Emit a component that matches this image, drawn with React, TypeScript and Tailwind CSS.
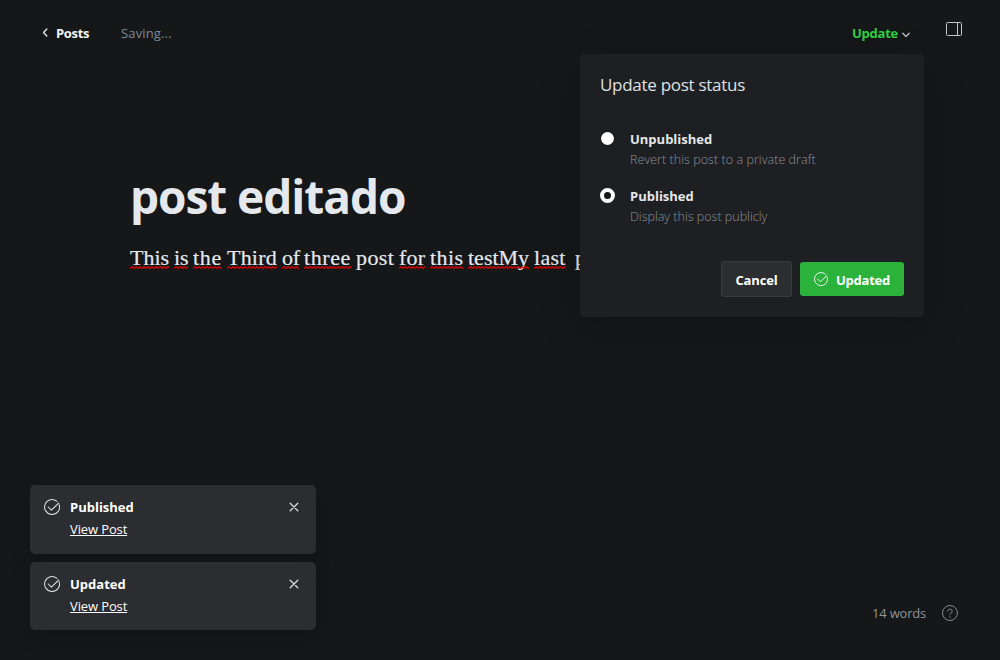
import React from "react";

const sans = "font-['Open_Sans','Noto_Sans',sans-serif]";

function CheckCircle({ className }: { className: string }) {
  return (
    <svg viewBox="0 0 24 24" fill="none" stroke="currentColor" strokeWidth="1.6" strokeLinecap="round" strokeLinejoin="round" className={className}>
      <path d="M22.8 8.8A11.2 11.2 0 1 1 19.4 3.6" />
      <path d="M6.4 12l4.6 4.8L22.2 6" />
    </svg>
  );
}

function Word({ text, box, gap, flagged = true }: { text: string; box: string; gap: string; flagged?: boolean }) {
  return (
    <span className={`relative block h-7 shrink-0 whitespace-nowrap ${box} ${gap}`}>
      {text}
      {flagged && (
        <svg className="absolute left-0 top-[22px] h-[3px] w-full">
          <rect width="100%" height="3" fill="url(#squiggle)" />
        </svg>
      )}
    </span>
  );
}

function Option({ title, note, checked, titleCls, noteCls }: { title: string; note: string; checked?: boolean; titleCls: string; noteCls: string }) {
  return (
    <div className="flex h-[57px] items-start">
      <span className={checked ? "mt-[4px] block size-[15px] rounded-full border-[4px] border-white bg-[#15171a]" : "ml-px mt-[5px] block size-[13px] rounded-full bg-white shadow-[0_0_0_1px_#15171a]"} />
      <div className={checked ? "ml-[15px] pt-px" : "ml-4 pt-px"}>
        <div className={`h-5 whitespace-nowrap text-[13px] font-bold leading-[22px] text-[#e5e7e9] ${titleCls}`}>{title}</div>
        <div className={`whitespace-nowrap text-[12.5px] font-light leading-6 text-[#8b9298] ${noteCls}`}>{note}</div>
      </div>
    </div>
  );
}

function Toast({ title, cls, height }: { title: string; cls: string; height: string }) {
  return (
    <div className={`flex w-[286px] items-start rounded-[5px] bg-[#2c2d30] pl-[14px] pr-[17px] pt-[14px] shadow-[0_6px_18px_rgba(0,0,0,0.2)] ${height}`}>
      <CheckCircle className="size-4 text-[#d8dadc]" />
      <div className="-mt-[2px] ml-[10px] grow">
        <div className={`h-5 text-[13px] font-bold leading-5 text-white ${cls}`}>{title}</div>
        <a className="mt-[2px] block w-fit whitespace-nowrap text-[13px] leading-5 tracking-[-0.12px] text-white underline decoration-1 underline-offset-1">View Post</a>
      </div>
      <svg viewBox="0 0 10 10" className="mt-[3px] size-[10px]" fill="none" stroke="#dcdddf" strokeWidth="1.3" strokeLinecap="round">
        <path d="M1.2 1.2l7.6 7.6M8.8 1.2L1.2 8.8" />
      </svg>
    </div>
  );
}

export default function App() {
  return (
    <div className={`relative flex h-[660px] w-[1000px] flex-col overflow-hidden bg-[#151719] ${sans}`}>
      <svg className="absolute size-0">
        <defs>
          <pattern id="squiggle" width="4" height="3" patternUnits="userSpaceOnUse">
            <path d="M-1 1.5L0 2.5L2 .5L4 2.5L5 1.5" fill="none" stroke="#e80000" strokeWidth="1.1" />
          </pattern>
        </defs>
      </svg>

      <header className="flex h-[58px] items-start pl-[42px] pr-[38px]">
        <svg viewBox="0 0 6 10" className="mt-[28px] h-[9px] w-[6px]" fill="none" stroke="#e5e7e9" strokeWidth="1.5" strokeLinecap="round" strokeLinejoin="round">
          <path d="M5 1.2L1.4 5L5 8.8" />
        </svg>
        <span className="ml-[8px] mt-[23px] w-[65px] text-[13px] font-bold leading-5 tracking-[-0.3px] text-[#f4f5f6]">Posts</span>
        <span className="mt-[23px] text-[13px] leading-5 tracking-[0.15px] text-[#7c8b9a]">Saving...</span>
        <span className="ml-auto mt-[23px] w-[50px] text-[13px] font-bold leading-5 tracking-[-0.25px] text-[#30cf43]">Update</span>
        <svg viewBox="0 0 8 6" className="mt-[32px] h-[6px] w-[8px]" fill="none" stroke="#b4b6b8" strokeWidth="1.4" strokeLinecap="round" strokeLinejoin="round">
          <path d="M.8 1.2L4 4.6L7.2 1.2" />
        </svg>
        <svg viewBox="0 0 16 14" className="ml-9 mt-[22px] h-[14px] w-4" fill="none" stroke="#c3c5c7">
          <rect x=".5" y=".5" width="15" height="13" rx="1" />
          <path d="M11.5 1v12" />
        </svg>
      </header>

      <main className="flex flex-col pl-[130px] pt-[103px]">
        <h1 className="h-[70px] whitespace-nowrap text-[46px] font-bold leading-[70px] tracking-[-1.05px] text-[#e5e9ed]">post editado</h1>
        <p className="mt-[13px] flex font-['Liberation_Serif',serif] text-[22px] leading-7 text-[#e5e9ed] [-webkit-text-stroke:0.2px_#e5e9ed]">
          <Word text="This" box="w-[39px]" gap="mr-[5px]" />
          <Word text="is" box="w-[14px]" gap="mr-[5px]" />
          <Word text="the" box="w-[29px] tracking-[0.7px]" gap="mr-[5px]" />
          <Word text="Third" box="w-[50px] tracking-[0.2px]" gap="mr-[5px]" />
          <Word text="of" box="w-[17px] tracking-[-0.2px]" gap="mr-[5px]" />
          <Word text="three" box="w-[47px] tracking-[0.6px]" gap="mr-[5px]" />
          <Word text="post" box="w-[38px] tracking-[0.4px]" gap="mr-[5px]" flagged={false} />
          <Word text="for" box="w-[26px] tracking-[0.2px]" gap="mr-[5px]" />
          <Word text="this" box="w-[33px] tracking-[0.4px]" gap="mr-[5px]" />
          <Word text="testMy" box="w-[61px]" gap="mr-[5px]" />
          <Word text="last" box="w-[32px] tracking-[0.3px]" gap="mr-[9px]" />
          <Word text="p" box="w-[12px]" gap="mr-0" flagged={false} />
        </p>
      </main>

      <section className="absolute left-[580px] top-[54px] flex h-[263px] w-[344px] flex-col rounded-[4px] bg-[#1e1f23] px-5 pt-[17px] shadow-[0_12px_40px_rgba(0,0,0,0.2)]">
        <h2 className="h-7 whitespace-nowrap text-[17px] leading-7 tracking-[-0.28px] text-[#dfe1e3]">Update post status</h2>
        <div className="mt-[28px] flex h-[120px] flex-col">
          <Option title="Unpublished" note="Revert this post to a private draft" titleCls="tracking-[0px]" noteCls="tracking-[0.05px]" />
          <Option checked title="Published" note="Display this post publicly" titleCls="tracking-[0px]" noteCls="tracking-[0px]" />
        </div>
        <div className="mt-[14px] flex justify-end gap-2">
          <button className="h-9 w-[71px] whitespace-nowrap rounded-[3px] border border-[#393b40] bg-[#2c2d30] pt-[3px] text-[13px] font-bold tracking-[-0.15px] text-white">Cancel</button>
          <button className="mt-px flex h-[34px] w-[104px] items-center rounded-[3px] bg-[#2ab23a] pl-[14px] text-[13px] font-bold tracking-[-0.25px] text-white">
            <CheckCircle className="size-[14px]" />
            <span className="ml-2 mt-[3px] whitespace-nowrap">Updated</span>
          </button>
        </div>
      </section>

      <footer className="mt-auto flex items-end pb-[30px] pl-[30px] pr-[42px]">
        <div className="flex flex-col gap-2">
          <Toast title="Published" cls="tracking-[0px]" height="h-[69px]" />
          <Toast title="Updated" cls="tracking-[0px]" height="h-[68px]" />
        </div>
        <div className="mb-[7px] ml-auto flex items-center">
          <span className="mr-4 w-[54px] whitespace-nowrap text-[13px] leading-5 tracking-[-0.2px] text-[#8e9499]">14 words</span>
          <svg viewBox="0 0 16 16" className="size-4" fill="none" stroke="#858789" strokeLinecap="round">
            <circle cx="8" cy="8" r="7.5" />
            <path d="M5.8 6.2a2.2 2.2 0 1 1 3.2 2c-.7.4-1 .8-1 1.6" />
            <path d="M8 12v.1" strokeWidth="1.3" />
          </svg>
        </div>
      </footer>
    </div>
  );
}
